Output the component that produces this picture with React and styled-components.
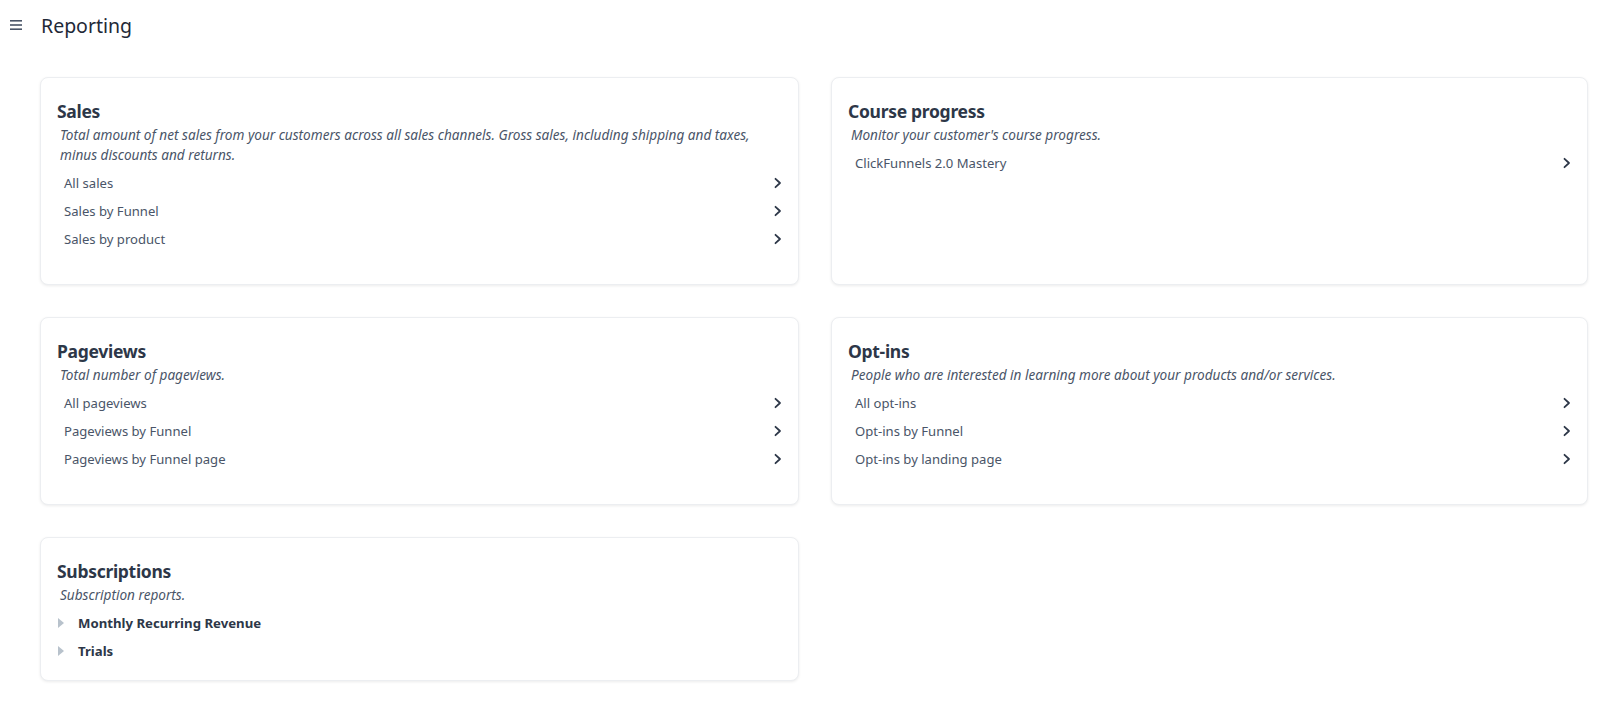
import React from 'react';
import styled, { createGlobalStyle } from 'styled-components';

const GlobalStyle = createGlobalStyle`
  body {
    margin: 0;
    background: #ffffff;
    font-family: "Noto Sans", "Open Sans", sans-serif;
    color: #2d3748;
  }
`;

const Page = styled.div`
  display: flex;
  flex-flow: column;
`;

const Header = styled.header`
  display: flex;
  align-items: center;
  gap: 19px;
  height: 50px;
  padding-left: 10px;
`;

const MenuButton = styled.button`
  display: flex;
  padding: 0;
  border: none;
  background: transparent;
  color: #4a5568;
  cursor: pointer;
`;

const PageTitle = styled.h1`
  margin: 0;
  font-size: 19.5px;
  font-weight: 400;
  color: #1f2937;
`;

const Grid = styled.div`
  display: grid;
  grid-template-columns: 759px 757px;
  gap: 32px;
  padding: 27px 24px 24px 40px;
  align-items: stretch;
`;

const Card = styled.section`
  display: flex;
  flex-flow: column;
  padding: 21px 16px 15px;
  background: #fff;
  border: 1px solid #eceef1;
  border-radius: 8px;
  box-shadow: 0 1px 3px rgba(0, 0, 0, 0.08);
`;

const Title = styled.h2`
  margin: 0;
  font-size: 17.5px;
  line-height: 24px;
  font-weight: 700;
  letter-spacing: -0.3px;
  color: #2d3748;
`;

const Description = styled.p`
  margin: 2px 0 4px 3px;
  padding-right: 10px;
  font-size: 13.6px;
  line-height: 20px;
  font-style: italic;
  color: #4a5568;
`;

const List = styled.ul`
  list-style: none;
  margin: 0 0 ${props => (props.$spaced ? '16px' : '0')};
  padding: 0;
`;

const LinkRow = styled.li`
  display: flex;
  align-items: center;
  justify-content: space-between;
  height: 28px;
  padding-left: 7px;
  font-size: 13.1px;
  color: #4a5568;
  cursor: pointer;
`;

const ToggleRow = styled.li`
  display: flex;
  align-items: center;
  gap: 14px;
  height: 28px;
  padding-left: 1px;
  font-size: 13.2px;
  font-weight: 700;
  color: #2d3748;
  cursor: pointer;
`;

function Chevron() {
  return (
    <svg width="8" height="12" viewBox="0 0 8 12" fill="none">
      <polyline points="1.5,1.8 6,6 1.5,10.2" stroke="#2d3748" strokeWidth="1.8" strokeLinecap="round" strokeLinejoin="round" />
    </svg>
  );
}

function Caret() {
  return (
    <svg width="6" height="10" viewBox="0 0 6 10">
      <polygon points="0,0 6,5 0,10" fill="#b8c2cc" />
    </svg>
  );
}

function Hamburger() {
  return (
    <svg width="12" height="12" viewBox="0 0 12 12">
      <rect x="0" y="1" width="12" height="1.6" fill="currentColor" />
      <rect x="0" y="5.2" width="12" height="1.6" fill="currentColor" />
      <rect x="0" y="9.4" width="12" height="1.6" fill="currentColor" />
    </svg>
  );
}

const reports = [
  {
    title: 'Sales',
    desc: 'Total amount of net sales from your customers across all sales channels. Gross sales, including shipping and taxes, minus discounts and returns.',
    links: ['All sales', 'Sales by Funnel', 'Sales by product'],
  },
  {
    title: 'Course progress',
    desc: "Monitor your customer's course progress.",
    links: ['ClickFunnels 2.0 Mastery'],
  },
  {
    title: 'Pageviews',
    desc: 'Total number of pageviews.',
    links: ['All pageviews', 'Pageviews by Funnel', 'Pageviews by Funnel page'],
  },
  {
    title: 'Opt-ins',
    desc: 'People who are interested in learning more about your products and/or services.',
    links: ['All opt-ins', 'Opt-ins by Funnel', 'Opt-ins by landing page'],
  },
];

function ReportCard({ title, desc, links }) {
  return (
    <Card>
      <Title>{title}</Title>
      <Description>{desc}</Description>
      <List $spaced>
        {links.map(link => (
          <LinkRow key={link}>
            {link}
            <Chevron />
          </LinkRow>
        ))}
      </List>
    </Card>
  );
}

export default function App() {
  return (
    <Page>
      <GlobalStyle />
      <Header>
        <MenuButton><Hamburger /></MenuButton>
        <PageTitle>Reporting</PageTitle>
      </Header>
      <Grid>
        {reports.map(r => <ReportCard key={r.title} {...r} />)}
        <Card>
          <Title>Subscriptions</Title>
          <Description>Subscription reports.</Description>
          <List>
            <ToggleRow><Caret />Monthly Recurring Revenue</ToggleRow>
            <ToggleRow><Caret />Trials</ToggleRow>
          </List>
        </Card>
      </Grid>
    </Page>
  );
}
